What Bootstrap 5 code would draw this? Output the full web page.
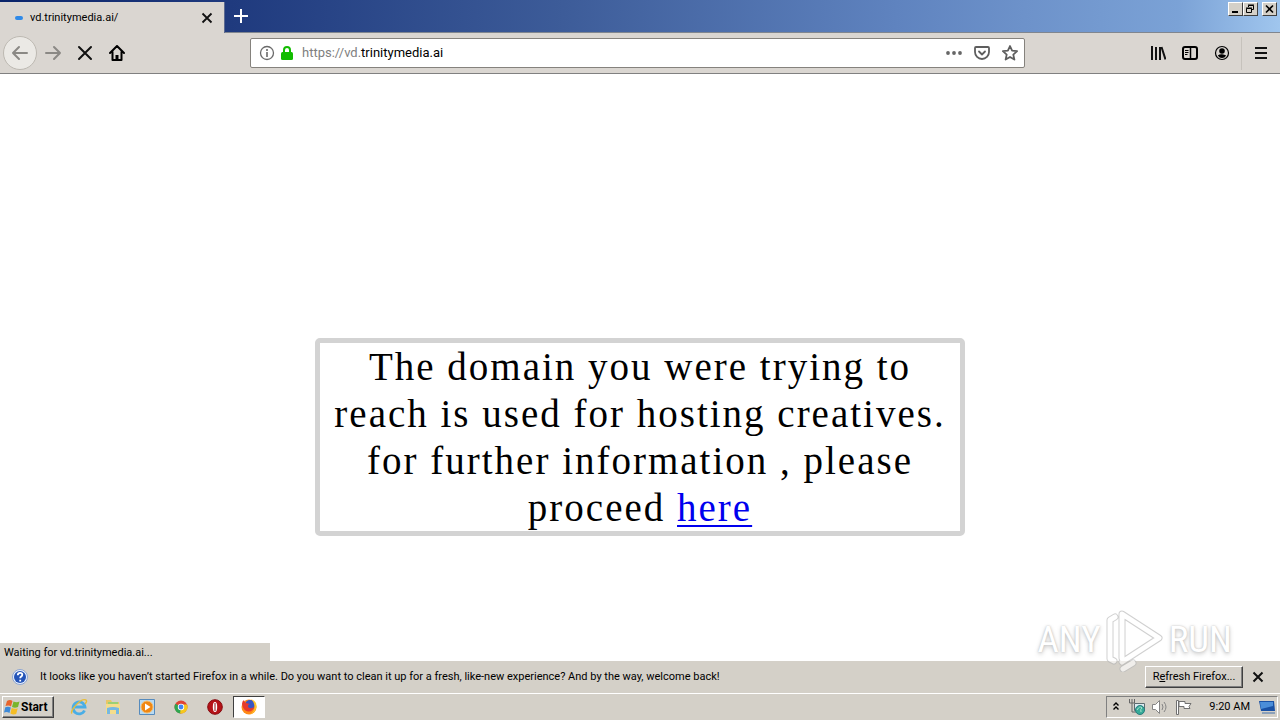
<!DOCTYPE html>
<html lang="en">
<head>
<meta charset="utf-8">
<meta name="viewport" content="width=device-width, initial-scale=1">
<title>vd.trinitymedia.ai/</title>
<link href="https://cdn.jsdelivr.net/npm/bootstrap@5.3.0/dist/css/bootstrap.min.css" rel="stylesheet">
<style>
  body { font-family: Roboto, sans-serif; font-size: 11px; line-height: 14px; color: #000; background: #fff; }
  svg { display: block; flex: none; }
  .titlebar { height: 33px; background: linear-gradient(92deg, #0a246a 0, #1f3a7e 18%, #3d5c99 44%, #5f83bf 70%, #6d92ca 80%, #7ba2d6 92%, #a0c6ee 100%); border-bottom: 1px solid #80868f; }
  .tab { width: 225px; margin-top: 2px; height: 31px; background: #dad6d1; border-right: 1px solid #5c6a90; padding-left: 15px; padding-right: 11px; margin-bottom: -1px; }
  .loader { width: 8px; height: 4px; border-radius: 2px; background: #2f8ae8; margin-right: 7px; }
  .bare { border: 0; background: none; padding: 0; color: inherit; display: flex; align-items: center; justify-content: center; }
  .winbtns { padding-top: 2px; padding-right: 3px; }
  .winbtn { width: 15px; height: 14px; padding: 0; background: #d4d0c8; border: 1px solid; border-color: #fff #404040 #404040 #fff; display: flex; align-items: center; justify-content: center; }
  .toolbar { height: 41px; background: #dad6d1; border-bottom: 1px solid #808080; }
  .tool { width: 32px; height: 32px; }
  .back { width: 34px; height: 34px; border-radius: 50%; background: #ebe9e5; border: 1px solid #bdb9b2; margin-left: 3px; color: #8b8985; }
  .urlbar { height: 30px; background: #fff; border: 1px solid #85827d; border-radius: 2px; margin-left: 117px; margin-right: 117px; padding-left: 8px; }
  .urlbar .bare { width: 28px; }
  .url { font-size: 13px; color: #808080; text-decoration: none; }
  .url span { color: #000; }
  .rule { width: 1px; height: 33px; background: #c6c2bc; margin: 0 3px; }
  .menu { margin-right: 3px; }
  .notice { width: 50%; box-sizing: content-box; border: 5px solid #d3d3d3; border-radius: 5px; font: 39px/47px "Liberation Serif", serif; letter-spacing: 2px; margin-top: 264px; }
  .notice a { color: #0000ee; text-decoration-thickness: 2px; text-underline-offset: 4px; }
  .status { width: 270px; height: 18px; background: #d4d0c8; padding-left: 4px; padding-top: 2px; }
  .infobar { height: 32px; background: #d4d0c8; padding-left: 12px; padding-right: 16px; }
  .raised { background: #d4d0c8; border: 1px solid; border-color: #fff #404040 #404040 #fff; box-shadow: inset -1px -1px #808080; color: #000; padding: 0; }
  .refresh { width: 98px; height: 22px; margin-right: 9px; }
  .taskbar { height: 27px; background: #d4d0c8; border-top: 1px solid #fff; padding: 2px; }
  .start { width: 52px; height: 22px; font-weight: bold; font-size: 12px; display: flex; align-items: center; padding-left: 1px; }
  .quick { width: 34px; height: 22px; }
  .quick.pressed { width: 32px; margin-left: 1px; background: #fff; border: 1px solid; border-color: #404040 #fff #fff #404040; }
  .tray { height: 22px; border: 1px solid; border-color: #808080 #fff #fff #808080; padding-left: 5px; padding-right: 1px; }
  .clock { width: 56px; text-align: right; }
  .brand { right: 48px; bottom: 48px; color: #fff; font: 37px/44px "Roboto Condensed", "Liberation Sans Narrow", sans-serif; text-shadow: 0 0 2px #999, 0 2px 4px #aaa; opacity: .65; pointer-events: none; }
</style>
</head>
<body class="d-flex flex-column min-vh-100">
<header>
  <div class="titlebar d-flex align-items-start">
    <div class="tab d-flex align-items-center">
      <span class="loader"></span><span class="flex-grow-1">vd.trinitymedia.ai/</span>
      <button class="bare" aria-label="Close tab"><svg width="12" height="12" viewBox="0 0 12 12" stroke="#111" stroke-width="1.8"><path d="M1.500 1.500l9 9M10.500 1.500l-9 9"/></svg></button>
    </div>
    <button class="bare tool text-white" aria-label="New tab"><svg width="14" height="14" stroke="#fff" stroke-width="2"><path d="M7 0v14M0 7h14"/></svg></button>
    <div class="winbtns d-flex ms-auto">
      <button class="winbtn" aria-label="Minimize"><svg width="11" height="10"><path d="M2 8h6" stroke="#000" stroke-width="2"/></svg></button>
      <button class="winbtn" aria-label="Restore"><svg width="11" height="10" fill="none" stroke="#000"><path d="M3.500 3V1.500h5v4H7M3 1h6"/><path d="M1.500 4.500h5v4h-5zM1 4h6"/></svg></button>
      <button class="winbtn ms-1" aria-label="Close"><svg width="11" height="10" stroke="#000" stroke-width="1.600"><path d="M2 1.500l7 7M9 1.500l-7 7"/></svg></button>
    </div>
  </div>
  <nav class="toolbar d-flex align-items-center" aria-label="Browser">
    <button class="bare back" aria-label="Back"><svg width="18" height="16" fill="none" stroke="currentColor" stroke-width="2" stroke-linecap="round" stroke-linejoin="round"><path d="M16 8H2M8 2L2 8l6 6"/></svg></button>
    <button class="bare tool" aria-label="Forward"><svg width="18" height="16" fill="none" stroke="#8b8985" stroke-width="2" stroke-linecap="round" stroke-linejoin="round"><path d="M2 8h14M10 2l6 6-6 6"/></svg></button>
    <button class="bare tool" aria-label="Stop"><svg width="16" height="16" stroke="#111" stroke-width="2" stroke-linecap="round"><path d="M2 2l12 12M14 2L2 14"/></svg></button>
    <button class="bare tool" aria-label="Home"><svg width="16" height="16" fill="none" stroke="#000" stroke-width="2" stroke-linecap="round" stroke-linejoin="round"><path d="M1 8l7-7 7 7M3.500 7v8h9V7"/><path d="M8 14v-4" stroke-width="3" stroke-linecap="butt"/></svg></button>
    <div class="urlbar flex-grow-1 d-flex align-items-center">
      <svg width="16" height="16" fill="none" stroke="#6a6a6a"><circle cx="8" cy="8" r="6.500" stroke-width="1.300"/><path d="M8 7v5M8 4v2" stroke-width="1.600"/></svg>
      <svg class="ms-1 me-2" width="15" height="16"><path d="M5 8V5a3 3 0 0 1 6 0v3" fill="none" stroke="#12bc00" stroke-width="2"/><rect x="2" y="7" width="12" height="8" rx="1.500" fill="#12bc00"/></svg>
      <a class="url flex-grow-1" href="#">https://vd.<span>trinitymedia.ai</span></a>
      <button class="bare" aria-label="Page actions"><svg width="16" height="16" fill="#666"><circle cx="2" cy="8" r="1.900"/><circle cx="8" cy="8" r="1.900"/><circle cx="14" cy="8" r="1.900"/></svg></button>
      <button class="bare" aria-label="Save to Pocket"><svg width="16" height="16" fill="none" stroke="#5e5e5e" stroke-width="1.800" stroke-linecap="round" stroke-linejoin="round"><path d="M2 2h12q1 0 1 1v4a7 7 0 0 1-14 0V3q0-1 1-1z"/><path d="M5 6.500l3 3 3-3"/></svg></button>
      <button class="bare" aria-label="Bookmark"><svg width="16" height="16" fill="none" stroke="#5e5e5e" stroke-width="1.800" stroke-linejoin="round"><path d="M8 1l2.100 4.700 5 .5-3.800 3.400 1.100 5L8 12l-4.400 2.600 1.100-5L.900 6.200l5-.5z"/></svg></button>
    </div>
    <button class="bare tool" aria-label="Library"><svg width="16" height="16" stroke="#111" stroke-width="2"><path d="M2 1v14M6 2v13M10 2v13M11.500 2l4 12.500" /></svg></button>
    <button class="bare tool" aria-label="Sidebars"><svg width="16" height="16" fill="none" stroke="#000" stroke-width="2"><rect x="1" y="2" width="14" height="12" rx="2"/><path d="M8.500 2v12" stroke-width="1.500"/><path d="M3 5.500h3.500M3 7.500h3.500M3 9.500h2.500" stroke-width="1"/></svg></button>
    <button class="bare tool" aria-label="Account"><svg width="16" height="16"><circle cx="8" cy="8" r="6.500" fill="none" stroke="#000" stroke-width="1.200"/><circle cx="8" cy="6" r="2.800"/><path d="M3.800 10.500Q5.500 9 8 9.200t4.200 1.300q-1.500 2.500-4.200 2.500t-4.200-2.500z"/></svg></button>
    <span class="rule"></span>
    <button class="bare tool menu" aria-label="Menu"><svg width="14" height="14" stroke="#111" stroke-width="2"><path d="M1 2h12M1 7h12M1 12h12"/></svg></button>
  </nav>
</header>

<main class="flex-grow-1 d-flex flex-column">
  <p class="notice mx-auto mb-auto text-center">The domain you were trying to reach is used for hosting creatives. for further information , please proceed <a href="#">here</a></p>
  <div class="status d-flex align-items-center">Waiting for vd.trinitymedia.ai...</div>
</main>

<footer>
  <div class="infobar d-flex align-items-center">
    <svg width="16" height="16" viewBox="0 0 16 16"><circle cx="8" cy="8" r="7.500" fill="#e8effc" stroke="#8da5d0"/><circle cx="8" cy="8" r="6" fill="#2454b8"/><path d="M5.800 6.200q0-2.400 2.300-2.400 2.200 0 2.200 1.900 0 1.200-1.200 1.900-.9.600-.9 1.600M8.200 10.800v1.800" fill="none" stroke="#fff" stroke-width="1.800"/></svg>
    <span class="flex-grow-1 ms-2 ps-1">It looks like you haven’t started Firefox in a while. Do you want to clean it up for a fresh, like-new experience? And by the way, welcome back!</span>
    <button class="raised refresh">R<u>e</u>fresh Firefox...</button>
    <button class="bare" aria-label="Dismiss"><svg width="12" height="12" stroke="#111" stroke-width="2"><path d="M1.500 1.500l9 9M10.500 1.500l-9 9"/></svg></button>
  </div>
  <div class="taskbar d-flex align-items-center">
    <button class="raised start"><svg width="17" height="16"><path d="M3 2q3-2 5.500 0L7 7.500Q5 6 1.500 7z" fill="#e8642c"/><path d="M9.500 2.500q3 1.500 6 0L14 8q-3 1.500-6 0z" fill="#79b52b"/><path d="M1.300 8.200q3-1.200 5.500.3L5.500 14Q3 12.500 0 13.500z" fill="#3e8ad8"/><path d="M7.700 9q3 1.500 6 .3L12.200 15q-3 1-5.800-.5z" fill="#f5bd24"/></svg>Start</button>
    <button class="bare quick ms-2" aria-label="Internet Explorer"><svg width="18" height="18"><path d="M14.500 12.500A6 6 0 1 1 15 9H5" fill="none" stroke="#4aaee6" stroke-width="2.800"/><path d="M2 15.500C-.5 13 11-.5 16 2q1.500 1-1 4" fill="none" stroke="#e7bd3a" stroke-width="1.400"/></svg></button>
    <button class="bare quick" aria-label="Explorer"><svg width="18" height="18"><path d="M2 2h5l1 2h7v10H2z" fill="#e8c766"/><path d="M4 4h10v4H4z" fill="#9cd074"/><path d="M2 6h14v10H2z" fill="#f5dd8b"/><path d="M3 16v-6q6-2 12 0v6h-3v-4H6v4z" fill="#76b8e2"/></svg></button>
    <button class="bare quick" aria-label="Media Player"><svg width="18" height="18"><path d="M1.500 1.500h15v15h-15z" fill="#b8daf2" stroke="#568bbd"/><circle cx="9" cy="9" r="6" fill="#f08712" stroke="#f8bc68"/><path d="M7 5.500v7L12.500 9z" fill="#fff"/></svg></button>
    <button class="bare quick" aria-label="Chrome"><svg width="16" height="16"><circle cx="8" cy="8" r="6.500" fill="#e04436"/><path d="M8 8L2.400 4.700A6.500 6.500 0 0 0 8 14.500z" fill="#2fa650"/><path d="M8 8l-1 6.500A6.500 6.500 0 0 0 14 5.500H8z" fill="#f6c81e"/><circle cx="8" cy="8" r="3.200" fill="#fff"/><circle cx="8" cy="8" r="2.400" fill="#4285f4"/></svg></button>
    <button class="bare quick" aria-label="Opera"><svg width="16" height="16"><circle cx="8" cy="8" r="7.300" fill="#b51217" stroke="#860b10"/><ellipse cx="8" cy="8" rx="2.200" ry="5" fill="#fff"/><path d="M8 4v8" stroke="#8c1115"/></svg></button>
    <button class="quick pressed bare" aria-label="Firefox"><svg width="18" height="18"><circle cx="9" cy="9" r="7.500" fill="#ff8a16"/><circle cx="10" cy="7" r="5" fill="#3856c5"/><path d="M2 6q0-3 2-4 0 2 2 3l4 1q-3 1-1.500 3.500 3 2 5.500-1-1 5.500-6 5-5-1-6-7.500z" fill="#e63a2e"/><path d="M11 1q6 2 5.500 8-1 6-7 7.500 5-3 5-7Q14.500 4 11 1z" fill="#ffc52d"/></svg></button>
    <div class="tray ms-auto d-flex align-items-center">
      <svg width="8" height="12" fill="none" stroke="#000" stroke-width="1.400"><path d="M1.500 4.500l2.500-2.500 2.500 2.500M1.500 8.500l2.500-2.500 2.500 2.500"/></svg>
      <svg class="ms-2" width="18" height="18"><path d="M6.500 5.500h10v7h-10z" fill="#dcebf0" stroke="#5c6b70"/><path d="M1.500 1v4h5V1M4 1v4M4 5v9h4" fill="none" stroke="#666"/><circle cx="12" cy="12" r="4.500" fill="#36ab98" stroke="#287b7e"/><path d="M9 12q3-5 5-2-2 1-1 4" fill="none" stroke="#abe2ce"/></svg>
      <svg class="ms-1" width="20" height="18" fill="none" stroke="#858585"><path d="M2.500 6.500h3l4-4v13l-4-4h-3z" fill="#fff"/><path d="M12 6q2 3 0 6M14 4q4 5 0 10"/></svg>
      <svg class="ms-1" width="20" height="18" fill="#fff" stroke="#707070"><path d="M4.500 2.500v14h-2v-14zM5 3.500h6v2h6l-2 3 1 2h-6v-2H5z"/></svg>
      <time class="clock me-2">9:20 AM</time>
      <svg width="18" height="18"><path d="M1 3h15l1 10H3z" fill="#1951a5"/><path d="M2 4h13v4L3 11z" fill="#4b8ed9"/><path d="M4 15h13" stroke="#8ba0b9" stroke-width="2"/></svg>
    </div>
  </div>
</footer>

<div class="brand position-absolute d-flex align-items-center" aria-hidden="true">
  <span>ANY</span>
  <svg class="mx-1" width="60" height="64" viewBox="0 0 60 64" fill="none" stroke-linejoin="round" stroke-linecap="round"><g stroke="#b8b8b8" stroke-width="7"><path d="M17 50V6l37 24-37 24M10 9L5 12v39l4 2M18 61l10-6"/></g><g stroke="#fff" stroke-width="5"><path d="M17 50V6l37 24-37 24M10 9L5 12v39l4 2M18 61l10-6"/></g></svg>
  <span>RUN</span>
</div>
<script src="https://cdn.jsdelivr.net/npm/bootstrap@5.3.0/dist/js/bootstrap.bundle.min.js"></script>
</body>
</html>
